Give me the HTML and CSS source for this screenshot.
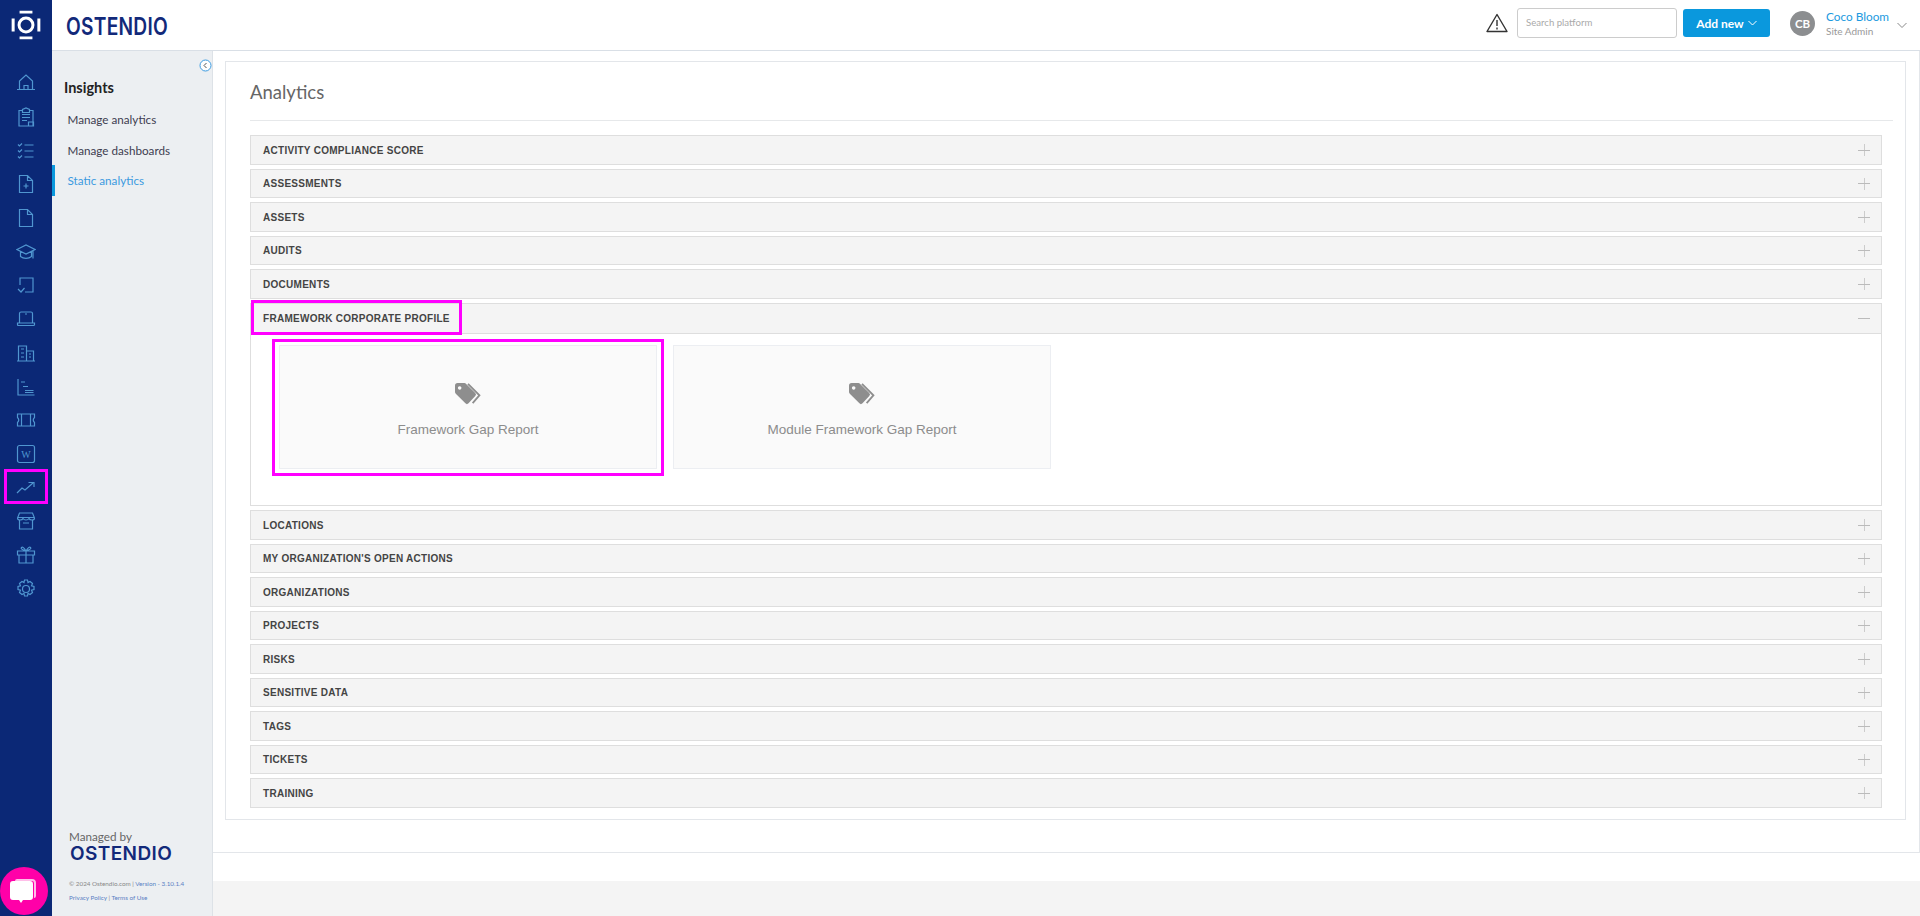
FILE: index.html
```html
<!DOCTYPE html>
<html lang="en">
<head>
<meta charset="utf-8">
<title>Analytics</title>
<link rel="stylesheet" href="styles.css">
</head>
<body>
<div class="app">
  <nav class="rail">
    <div class="rail-logo">
      <svg width="30" height="30" viewBox="0 0 28 28" fill="none" stroke="#fff"><circle cx="14" cy="14" r="6.500" stroke-width="2.800"/><path d="M8 2h12M8 26h12" stroke-width="2.400"/><path d="M2 8v12M26 8v12" stroke-width="2.800"/></svg>
    </div>
    <div class="rail-icons">
      <a class="rail-item"><svg viewBox="0 0 20 20"><path d="M1 16.500h18M3.500 16.500V8L10 2l6.500 6v8.500M8 16.500v-4h4v4"/></svg></a>
      <a class="rail-item"><svg viewBox="0 0 20 20"><path d="M3 3.500h3.500V2.500L10 1l3.500 1.500v1H17V19H3zM6 7.500h8M6 10.500h8M6 13.500h5M6.500 3.500v2h7v-2M12.500 15h5v4h-5z"/></svg></a>
      <a class="rail-item"><svg viewBox="0 0 20 20"><path d="M2 3.500l1.500 1.500L6 2.500M2 9.500l1.500 1.500L6 8.500M2 15.500l1.500 1.500L6 14.500M8.500 4h9M8.500 10h9M8.500 16h9"/></svg></a>
      <a class="rail-item"><svg viewBox="0 0 20 20"><path d="M3.500 1.500h8l5 5v12h-13zM11.500 1.500v5h5M10 9.500v5M7.500 12h5"/></svg></a>
      <a class="rail-item"><svg viewBox="0 0 20 20"><path d="M3.500 1.500h8l5 5v12h-13zM11.500 1.500v5h5"/></svg></a>
      <a class="rail-item"><svg viewBox="0 0 20 20"><path d="M1 7.500L10 3l9 4.500-9 4.500zM4.500 9.500v5c3 2.500 8 2.500 11 0v-5M17 8.500v8"/></svg></a>
      <a class="rail-item"><svg viewBox="0 0 20 20"><path d="M4 10V3h13v14h-8M2 14l3 3 3.500-4"/></svg></a>
      <a class="rail-item"><svg viewBox="0 0 20 20"><path d="M3.500 4.500q0-1.500 1.500-1.500h10q1.500 0 1.500 1.500V14h-13zM1.500 14h17v1.500q0 1-1 1h-15q-1 0-1-1zM9 5h2"/></svg></a>
      <a class="rail-item"><svg viewBox="0 0 20 20"><path d="M1 18h18M2.500 18V3h8v15M10.500 8h7v10M5 6h3M5 10h3M5 14h3M13 11h2M13 14h2"/></svg></a>
      <a class="rail-item"><svg viewBox="0 0 20 20"><path d="M2 2v16h16.500M5 5h4M7 9.500h5M9 13.500h8.500M9 15.500h8.500"/></svg></a>
      <a class="rail-item"><svg viewBox="0 0 20 20"><path d="M1.500 4h17v3.500q-2.500 2.500 0 5V16h-17v-3.500q2.500-2.500 0-5zM5.500 4v12M14.500 4v12"/></svg></a>
      <a class="rail-item"><svg viewBox="0 0 20 20"><rect x="1.500" y="1.500" width="17" height="17" rx="2"/><text x="10" y="14" class="wiki">W</text></svg></a>
      <a class="rail-item"><svg viewBox="0 0 20 20"><path d="M1 15l5-5 3 2 8-7M12.500 4.500H18V9"/></svg></a>
      <a class="rail-item"><svg viewBox="0 0 20 20"><path d="M3.500 2h13l2 5q0 2-2.500 2t-3-1.500Q12 9 10 9T7 7.500Q6.500 9 4 9T1.500 7zM3.500 9v9h13V9M1.500 6.500h17M7 12h6"/></svg></a>
      <a class="rail-item"><svg viewBox="0 0 20 20"><path d="M1.500 6h17v4h-17zM3 10v8h14v-8M10 6v12M10 6Q7 1 5.500 2.500T10 6q3-5 4.500-3.500T10 6"/></svg></a>
      <a class="rail-item"><svg viewBox="0 0 20 20"><circle cx="10" cy="10" r="3.500"/><path d="M8.500 1h3l.5 2.500 2-1 2.500 2-1 2.300 2.500.7v3l-2.500.7 1 2.300-2.500 2-2-1-.5 2.500h-3l-.5-2.500-2 1-2.500-2 1-2.300-2.500-.7v-3l2.500-.7-1-2.300 2.500-2 2 1z"/></svg></a>
    </div>
    <div class="rail-mark"></div>
  </nav>

  <div class="column">
    <header class="topbar">
      <div class="brand">OSTENDIO</div>
      <div class="top-actions">
        <svg class="warn" width="22" height="20" viewBox="0 0 22 20" fill="none" stroke="#333" stroke-width="1.400"><path d="M11 1.500L1 18.500h20z" stroke-linejoin="round"/><path d="M11 7v6M11 14.500v2"/></svg>
        <div class="search">Search platform</div>
        <button class="add">Add new <svg width="9" height="6" viewBox="0 0 9 6" fill="none" stroke="#fff"><path d="M.5 1l4 4 4-4"/></svg></button>
        <div class="avatar">CB</div>
        <div class="user"><div class="user-name">Coco Bloom</div><div class="user-role">Site Admin</div></div>
        <svg class="user-chev" width="10" height="6" viewBox="0 0 10 6" fill="none" stroke="#888"><path d="M.5 1l4.500 4.500L9.500 1"/></svg>
      </div>
    </header>

    <div class="body">
      <aside class="sidebar">
        <svg class="collapse" width="13" height="13" viewBox="0 0 13 13" fill="#fff" stroke="#3b9ae0"><circle cx="6.500" cy="6.500" r="5.500"/><path d="M7.500 4L5 6.500 7.500 9" fill="none" stroke="#555"/></svg>
        <h2 class="side-title">Insights</h2>
        <a class="side-link">Manage analytics</a>
        <a class="side-link">Manage dashboards</a>
        <a class="side-link active">Static analytics</a>
        <div class="side-foot">
          <div class="managed">Managed by</div>
          <div class="foot-brand">OSTENDIO</div>
          <div class="legal">© 2024 Ostendio.com | <span class="legal-link">Version - 3.10.1.4</span></div>
          <div class="legal legal-second"><span class="legal-link">Privacy Policy</span> | <span class="legal-link">Terms of Use</span></div>
        </div>
      </aside>

      <main class="main">
        <div class="main-white">
          <section class="panel">
            <h1 class="panel-title">Analytics</h1>
            <div class="acc"><span>ACTIVITY COMPLIANCE SCORE</span><i class="plus"></i></div>
            <div class="acc"><span>ASSESSMENTS</span><i class="plus"></i></div>
            <div class="acc"><span>ASSETS</span><i class="plus"></i></div>
            <div class="acc"><span>AUDITS</span><i class="plus"></i></div>
            <div class="acc"><span>DOCUMENTS</span><i class="plus"></i></div>
            <div class="acc-open">
              <div class="acc acc-head"><span>FRAMEWORK CORPORATE PROFILE</span><i class="plus minus"></i><b class="mark mark-title"></b></div>
              <div class="cards">
                <div class="card">
                  <svg class="tag" width="27" height="22" viewBox="0 0 26 21"><path fill="#8e8e8e" d="M0 2.500Q0 0 2.500 0H9q1 0 2 1l8.500 8.500q1.500 1.500 0 3l-6.500 7q-1.500 1.500-3 0L1 10.500Q0 9.500 0 8.500zM4.500 3a1.700 1.700 0 1 0 .01 0z" fill-rule="evenodd"/><path fill="none" stroke="#8e8e8e" stroke-width="1.800" d="M12.500 .8l11 11-6.500 7.500"/></svg>
                  <div class="card-label">Framework Gap Report</div>
                  <b class="mark mark-card"></b>
                </div>
                <div class="card">
                  <svg class="tag" width="27" height="22" viewBox="0 0 26 21"><path fill="#8e8e8e" d="M0 2.500Q0 0 2.500 0H9q1 0 2 1l8.500 8.500q1.500 1.500 0 3l-6.500 7q-1.500 1.500-3 0L1 10.500Q0 9.500 0 8.500zM4.500 3a1.700 1.700 0 1 0 .01 0z" fill-rule="evenodd"/><path fill="none" stroke="#8e8e8e" stroke-width="1.800" d="M12.500 .8l11 11-6.500 7.500"/></svg>
                  <div class="card-label">Module Framework Gap Report</div>
                </div>
              </div>
            </div>
            <div class="acc"><span>LOCATIONS</span><i class="plus"></i></div>
            <div class="acc"><span>MY ORGANIZATION'S OPEN ACTIONS</span><i class="plus"></i></div>
            <div class="acc"><span>ORGANIZATIONS</span><i class="plus"></i></div>
            <div class="acc"><span>PROJECTS</span><i class="plus"></i></div>
            <div class="acc"><span>RISKS</span><i class="plus"></i></div>
            <div class="acc"><span>SENSITIVE DATA</span><i class="plus"></i></div>
            <div class="acc"><span>TAGS</span><i class="plus"></i></div>
            <div class="acc"><span>TICKETS</span><i class="plus"></i></div>
            <div class="acc"><span>TRAINING</span><i class="plus"></i></div>
          </section>
        </div>
        <div class="main-gap"></div>
        <div class="main-gray"></div>
      </main>
    </div>
  </div>
  <div class="chat">
    <svg width="28" height="28" viewBox="0 0 28 28"><path fill="#fff" opacity=".75" d="M7 2h15q4 0 4 4v13q0 2-2 2V6q0-2-2-2H5q0-2 2-2z"/><path fill="#fff" d="M3 4h17q3 0 3 3v13q0 3-3 3h-7l-2 3-2-3H3q-3 0-3-3V7q0-3 3-3z"/></svg>
  </div>
</div>
</body>
</html>
```
FILE: styles.css
```css
* { box-sizing: border-box; }
html, body { margin: 0; height: 100%; overflow: hidden; }
body { font-family: "Lato", "Noto Sans", sans-serif; color: #333; background: #fff; }
.app { position: relative; display: flex; width: 1920px; height: 916px; }

.rail { position: relative; width: 52px; flex: none; background: #0b2876; display: flex; flex-direction: column; }
.rail-logo { height: 50px; display: flex; align-items: center; justify-content: center; }
.rail-icons { display: flex; flex-direction: column; padding-top: 16.500px; }
.rail-item { height: 33.700px; display: flex; align-items: center; justify-content: center; }
.rail-item svg { width: 20px; height: 20px; fill: none; stroke: #5096d0; stroke-width: 1.200; }
.wiki { font: 10px "Liberation Serif", serif; text-anchor: middle; fill: #5096d0; stroke: none; }
.rail-mark { position: absolute; left: 4px; top: 469px; width: 44px; height: 35px; border: 3px solid #ff00ff; }

.column { flex: 1; min-width: 0; display: flex; flex-direction: column; }
.topbar { height: 51px; flex: none; display: flex; align-items: center; padding: 0 13px 0 14px; background: #fff; border-bottom: 1px solid #d9dfe6; }
.brand { font: 600 24px "Inter", sans-serif; color: #12297a; transform: scaleX(.8); transform-origin: left center; letter-spacing: .3px; margin-top: 2px; }
.top-actions { margin: 0 0 4px auto; display: flex; align-items: center; }
.warn { margin-right: 9px; }
.search { width: 160px; height: 30px; border: 1px solid #ccc; border-radius: 3px; padding-left: 8px; font-size: 9.600px; line-height: 27px; color: #aaa; }
.add { width: 87px; height: 28px; margin-left: 6px; border: 0; border-radius: 3px; background: #0a98dd; color: #fff; font: 700 12px "Lato", sans-serif; display: flex; align-items: center; justify-content: center; gap: 4px; padding: 0; }
.avatar { width: 25px; height: 25px; margin-left: 20px; border-radius: 50%; background: #8c8e90; color: #fff; font-weight: 700; font-size: 11.500px; text-align: center; line-height: 25px; }
.user { width: 71px; margin: 2px 0 0 11px; }
.user-name { font-size: 11.800px; color: #1b9ae0; line-height: 15px; }
.user-role { font-size: 10px; color: #999; line-height: 15px; }
.user-chev { margin-top: 3px; }

.body { flex: 1; min-height: 0; display: flex; }
.sidebar { position: relative; width: 161px; flex: none; background: #eceff2; border-right: 1px solid #dde2e7; padding-top: 27px; display: flex; flex-direction: column; }
.collapse { position: absolute; right: 0; top: 8px; }
.side-title { margin: 0 0 6px 12px; font-size: 14.500px; font-weight: 700; line-height: 20px; color: #222; }
.side-link { height: 30.500px; padding-left: 15.500px; font-size: 11.700px; line-height: 30.500px; color: #3d3d50; }
.side-link.active { color: #3b9ae0; border-left: 3px solid #0a98dd; padding-left: 12.500px; }
.side-foot { margin-top: auto; padding: 0 0 14px 17px; }
.managed { font-size: 11.700px; color: #666; line-height: 14px; }
.foot-brand { font: 600 19px "Inter", sans-serif; color: #12297a; line-height: 22px; letter-spacing: .4px; margin: 0 0 14.500px 1px; }
.legal { font-size: 6.300px; color: #888; line-height: 8px; white-space: nowrap; }
.legal-second { margin-top: 6.500px; }
.legal-link { color: #5b7fc4; }

.main { flex: 1; min-width: 0; display: flex; flex-direction: column; }
.main-white { height: 802px; padding: 10px 13px 0 12px; border-right: 1px solid #e3e6ea; border-bottom: 1px solid #e3e6ea; }
.main-gap { height: 28px; }
.main-gray { flex: 1; background: #f4f4f4; }

.panel { height: 759px; padding: 0 23px 0 24px; border: 1px solid #e3e6ea; }
.panel-title { margin: 0 -11px 14px 0; height: 59px; border-bottom: 1px solid #e6e8ea; font-size: 18.500px; font-weight: 400; line-height: 60px; color: #666; }

.acc { position: relative; height: 29.500px; margin-bottom: 4px; padding: 1px 11px 0 12px; display: flex; align-items: center; justify-content: space-between; background: #f4f4f4; border: 1px solid #dedede; font: 700 10px "Liberation Sans", sans-serif; letter-spacing: .28px; color: #444; }
.acc-open { height: 203.500px; margin-bottom: 4px; border: 1px solid #dedede; border-top: 0; }
.acc-head { margin: 0 -1px; height: 31px; }
.plus { position: relative; width: 12px; height: 12px; background: linear-gradient(#bbb, #bbb) center/12px 1px no-repeat, linear-gradient(#ccc, #ccc) center/1px 12px no-repeat; }
.minus { background: linear-gradient(#bbb, #bbb) center/12px 1px no-repeat; }
.mark { position: absolute; border: 3px solid #ff00ff; display: block; }
.mark-title { left: 0; top: -4px; width: 211px; height: 35px; }
.cards { display: flex; gap: 16px; padding: 11px 0 0 28px; }
.card { position: relative; width: 378px; height: 124.500px; background: #fafafa; border: 1px solid #eceef2; display: flex; flex-direction: column; align-items: center; padding-top: 37px; }
.card-label { margin-top: 17px; font: 13.500px "Liberation Sans", sans-serif; color: #8c8c8c; }
.mark-card { left: -8px; top: -7px; width: 392px; height: 137px; }

.chat { position: absolute; left: 0; bottom: 1px; width: 48px; height: 48px; border-radius: 50%; background: #ff00a8; display: flex; align-items: center; justify-content: center; }
```
